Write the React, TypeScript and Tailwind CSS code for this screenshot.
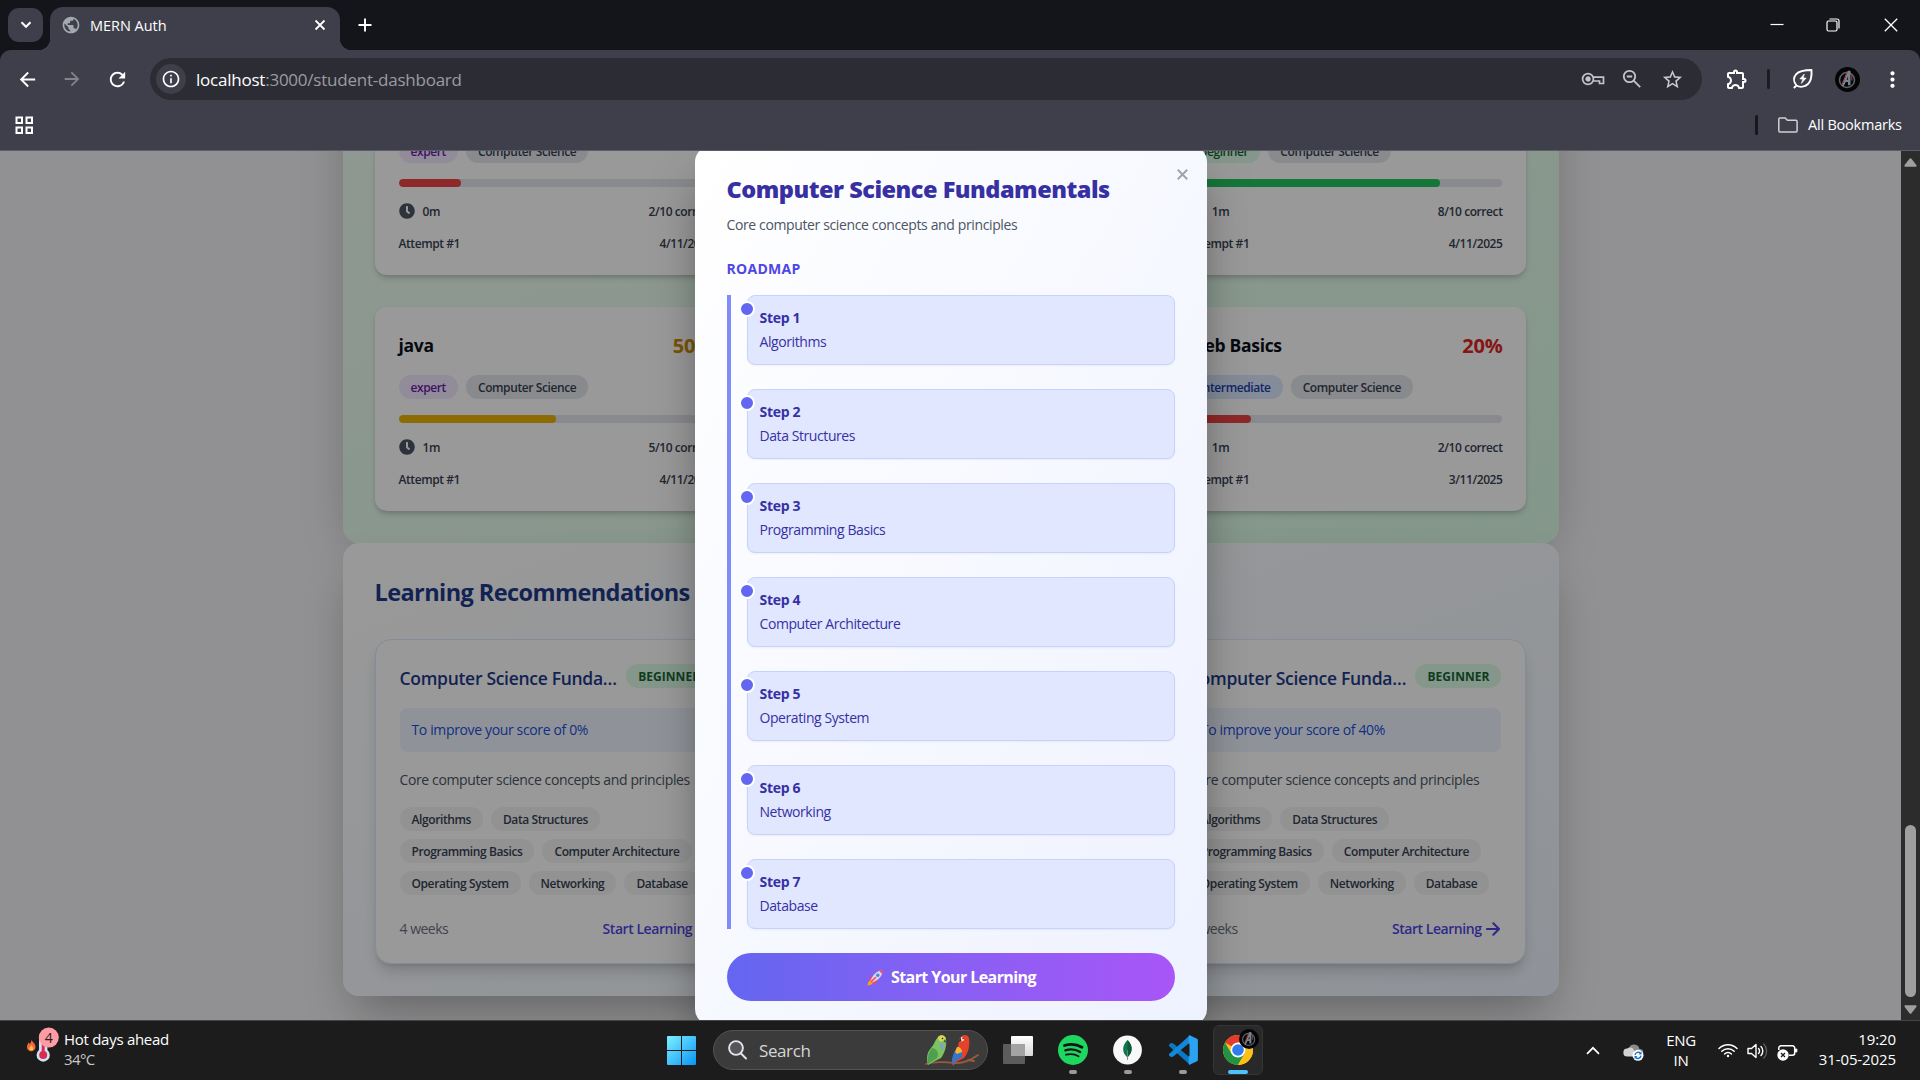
import React from "react";
import { FaClock } from "react-icons/fa";
import {
  MdArrowBack,
  MdArrowForward,
  MdInfoOutline,
  MdMoreVert,
  MdOutlineExtension,
  MdPublic,
  MdRefresh,
  MdStarBorder,
} from "react-icons/md";

type Tone = "red" | "yellow" | "green";

const barTone: Record<Tone, string> = {
  red: "bg-[#ef4444]",
  yellow: "bg-[#eab308]",
  green: "bg-[#22c55e]",
};
const scoreTone: Record<Tone, string> = {
  red: "text-[#dc2626]",
  yellow: "text-[#ca8a04]",
  green: "text-[#16a34a]",
};
const levelTone: Record<string, string> = {
  expert: "bg-[#f3e8ff] text-[#6b21a8]",
  intermediate: "bg-[#dbeafe] text-[#1e40af]",
  beginner: "bg-[#dcfce7] text-[#166534]",
};

interface Quiz {
  title: string;
  level: string;
  score: number;
  tone: Tone;
  time: string;
  date: string;
}

const quizzes: Quiz[] = [
  { title: "java", level: "expert", score: 20, tone: "red", time: "0m", date: "4/11/2025" },
  { title: "java", level: "expert", score: 50, tone: "yellow", time: "1m", date: "4/11/2025" },
  { title: "Basics", level: "beginner", score: 80, tone: "green", time: "1m", date: "4/11/2025" },
  { title: "java", level: "expert", score: 50, tone: "yellow", time: "1m", date: "4/11/2025" },
  { title: "java", level: "expert", score: 50, tone: "yellow", time: "1m", date: "4/11/2025" },
  { title: "Web Basics", level: "intermediate", score: 20, tone: "red", time: "1m", date: "3/11/2025" },
];

const topics = [
  "Algorithms",
  "Data Structures",
  "Programming Basics",
  "Computer Architecture",
  "Operating System",
  "Networking",
  "Database",
];

function AvatarMark({ className }: { className: string }) {
  return (
    <svg viewBox="0 0 26 26" className={className}>
      <circle cx="13" cy="13" r="13" fill="#050506" />
      <circle cx="12.5" cy="13.500" r="7.800" fill="none" stroke="#59646e" strokeWidth="1.600" />
      <path d="M7 20 13.500 4h2.600v15h-2.600v-3.500h-2.300L9 20z" fill="#76838e" />
      <path d="M12 13.300 13.600 9.500v3.800z" fill="#1a1012" />
      <path d="M13 4.500 7.500 18M17.500 8v6" stroke="#a84a44" strokeWidth="1.100" />
    </svg>
  );
}

function BrowserChrome() {
  return (
    <header className="flex h-[151px] shrink-0 flex-col border-b border-[#5c5d69] bg-[#14151a] text-white">
      <div className="flex h-[50px] shrink-0 pl-2">
        <div className="mt-2 flex h-[34px] w-[35px] items-center justify-center rounded-[11px] bg-[#3e3f4b]">
          <svg width="12" height="8" viewBox="0 0 12 8" fill="none" stroke="#fff" strokeWidth="2">
            <path d="M1.500 1.300 6 5.800l4.500-4.500" />
          </svg>
        </div>
        <div className="relative mt-[7px] ml-[7px] flex h-[43px] w-[290px] items-center rounded-t-[13px] bg-[#3e3f4b] pb-[7px] pl-[11px]">
          <span className="absolute bottom-0 -left-3 size-3 bg-[radial-gradient(circle_at_0_0,transparent_12px,#3e3f4b_12.500px)]" />
          <span className="absolute -right-3 bottom-0 size-3 bg-[radial-gradient(circle_at_100%_0,transparent_12px,#3e3f4b_12.500px)]" />
          <MdPublic className="size-[20px] text-[#a5a8ae]" />
          <span className="ml-[9px] flex-1 pt-px text-[14.500px] leading-5 tracking-[-0.03px]">MERN Auth</span>
          <svg width="12" height="12" viewBox="0 0 12 12" stroke="#fff" strokeWidth="1.8" className="mr-[14px]">
            <path d="m1.500 1.500 9 9m0-9-9 9" />
          </svg>
        </div>
        <svg width="14" height="14" viewBox="0 0 14 14" stroke="#fff" strokeWidth="1.900" className="mt-[18px] ml-[18px]">
          <path d="M7 .5v13M.5 7h13" />
        </svg>
        <div className="ml-auto flex h-[49px] items-center">
          <svg width="14" height="14" viewBox="0 0 14 14" stroke="#fff" strokeWidth="1.200" className="mr-[42px]">
            <path d="M.5 6.500h13" />
          </svg>
          <svg width="14" height="14" viewBox="0 0 14 14" fill="none" stroke="#fff" strokeWidth="1.200" className="mr-[44px]">
            <rect x="1" y="3" width="10" height="10" rx="1.500" />
            <path d="M3.500 1H11a2 2 0 0 1 2 2v7.500" />
          </svg>
          <svg width="14" height="14" viewBox="0 0 14 14" stroke="#fff" strokeWidth="1.300" className="mr-[22px]">
            <path d="m.8.8 12.400 12.400m0-12.400L.8 13.200" />
          </svg>
        </div>
      </div>

      <div className="flex h-[100px] flex-col rounded-t-[11px] bg-[#3e3f4b]">
        <div className="mt-2 flex h-[42px] shrink-0 items-center">
          <MdArrowBack className="ml-[16px] size-[23px]" />
          <MdArrowForward className="ml-[22px] size-[22px] text-[#82838b]" />
          <MdRefresh className="ml-[23px] size-[23px]" />
          <div className="ml-[21px] flex h-[42px] w-[1552px] items-center rounded-full bg-[#2c2d34] pr-[18px] pl-[6px]">
            <div className="flex size-[30px] items-center justify-center rounded-full bg-[#3e3f4b]">
              <MdInfoOutline className="size-5" />
            </div>
            <span className="ml-[10px] flex-1 pt-px text-[17px] leading-6 tracking-[-0.23px] text-[#9b9ca3]">
              <span className="text-white">localhost</span>:3000/student-dashboard
            </span>
            <svg width="24" height="14" viewBox="0 0 24 14" fill="none" stroke="#c3c4c9" strokeWidth="1.700">
              <circle cx="7" cy="7" r="5.400" />
              <circle cx="7" cy="7" r="1.800" fill="#c3c4c9" />
              <path d="M12 5.200h10.500v6.300h-4V9H12" />
            </svg>
            <svg width="20" height="20" viewBox="0 0 20 20" fill="none" stroke="#c3c4c9" strokeWidth="1.800" className="ml-[17px]">
              <circle cx="7.500" cy="7.500" r="5.700" />
              <path d="m11.700 11.700 6.500 6.500M4.800 7.500h5.400" />
            </svg>
            <MdStarBorder className="ml-[19px] size-[23px] text-[#c9cace]" />
          </div>
          <MdOutlineExtension className="ml-[23px] size-[24px]" />
          <span className="ml-[18px] h-5 w-[3px] rounded bg-[#1b1c22]" />
          <svg width="22" height="22" viewBox="0 0 22 22" fill="none" stroke="#fff" strokeWidth="1.900" strokeLinejoin="round" className="ml-[22px]">
            <path d="M4.500 17.500C1.500 14 1.200 9.500 4 6.300 7 3 12 2 19.500 2c.4 6-.3 11-3.500 14-3.200 3-8 3.500-11.500 1.500zm0 0L1.800 20" />
            <path d="m12.300 6-4.500 5h3l-1.500 4.500 4.900-5.500h-3z" fill="#fff" strokeWidth=".6" />
          </svg>
          <AvatarMark className="ml-[21px] size-[25px]" />
          <MdMoreVert className="ml-[20px] size-[25px]" />
        </div>
        <div className="flex h-[50px] items-center">
          <svg width="18" height="18" viewBox="0 0 18 18" fill="none" stroke="#fff" strokeWidth="2" className="ml-[15px]">
            <path d="M1.500 1.500H7V7H1.500zM11.500 1.500H17V7h-5.500zM1.500 11.500H7V17H1.500zM11.500 11.500H17V17h-5.500z" />
          </svg>
          <span className="ml-auto h-5 w-[3px] rounded bg-[#17181d]" />
          <svg width="20" height="16" viewBox="0 0 20 16" fill="none" stroke="#d0d1d5" strokeWidth="1.500" className="ml-[20px]">
            <path d="M2 .9h5.200l2.200 2.300h8.500a1.200 1.200 0 0 1 1.200 1.200v9.300a1.200 1.200 0 0 1-1.200 1.200H2a1.200 1.200 0 0 1-1.200-1.200V2.100A1.200 1.200 0 0 1 2 .9z" />
          </svg>
          <span className="mr-[17px] ml-[10px] w-[95px] text-[14.500px] leading-5 tracking-[-0.22px] whitespace-nowrap">All Bookmarks</span>
        </div>
      </div>
    </header>
  );
}

function QuizCard({ quiz }: { quiz: Quiz }) {
  return (
    <article className="flex h-[204px] flex-col rounded-xl bg-white p-6 shadow-[0_4px_6px_-1px_rgba(0,0,0,0.16),0_2px_4px_-2px_rgba(0,0,0,0.16)]">
      <div className="flex h-7 items-center justify-between">
        <h3 className="text-[17.500px] leading-7 font-bold tracking-[-0.3px] text-[#0b0f19]">{quiz.title}</h3>
        <span className={`pt-px text-[20px] leading-7 font-bold tracking-[-0.2px] ${scoreTone[quiz.tone]}`}>{quiz.score}%</span>
      </div>
      <div className="mt-4 flex gap-2 text-[12px] leading-4 font-semibold tracking-[-0.4px]">
        <span className={`rounded-full px-3 pt-[5px] pb-[3px] ${levelTone[quiz.level]}`}>{quiz.level}</span>
        <span className="rounded-full bg-[#e5e7eb] px-3 pt-[5px] pb-[3px] text-[#374151]">Computer Science</span>
      </div>
      <div className="mt-4 h-2 overflow-hidden rounded-full bg-[#e5e7eb]">
        <div className={`h-2 rounded-full ${barTone[quiz.tone]}`} style={{ width: `${quiz.score}%` }} />
      </div>
      <div className="mt-4 flex h-4 items-center text-[12px] leading-4 font-semibold tracking-[-0.42px] text-[#374151]">
        <FaClock className="size-4 text-[#4b5563]" />
        <span className="ml-2 pt-0.5">{quiz.time}</span>
        <span className="ml-auto pt-0.5">{quiz.score / 10}/10 correct</span>
      </div>
      <div className="mt-4 flex h-4 items-center justify-between text-[12px] leading-4 font-semibold tracking-[-0.42px] text-[#374151]">
        <span className="pt-0.5">Attempt #1</span>
        <span className="pt-0.5">{quiz.date}</span>
      </div>
    </article>
  );
}

function CourseCard({ score }: { score: number }) {
  return (
    <article className="min-w-0 rounded-2xl border border-[#dbeafe] bg-white p-6 shadow-[0_10px_15px_-3px_rgba(0,0,0,0.16),0_4px_6px_-4px_rgba(0,0,0,0.16)]">
      <div className="flex h-7 items-start justify-between">
        <h3 className="w-[221px] truncate text-[17.500px] leading-7 font-semibold tracking-[-0.3px] text-[#1e3a8a]">
          Computer Science Fundamentals
        </h3>
        <span className="rounded-full bg-[#dcfce7] px-3 pt-[5px] pb-[3px] text-[12px] leading-4 font-bold tracking-[0.05px] text-[#166534]">BEGINNER</span>
      </div>
      <div className="mt-4 rounded-lg bg-[#eff6ff] p-3 text-[14px] leading-5 tracking-[-0.36px] text-[#1d4ed8]">
        To improve your score of {score}%
      </div>
      <p className="mt-4 text-[14px] leading-[23px] tracking-[-0.38px] whitespace-nowrap text-[#4b5563]">
        Core computer science concepts and principles
      </p>
      <div className="mt-4 flex flex-wrap gap-2 text-[12px] leading-4 font-semibold tracking-[-0.4px] text-[#374151]">
        {topics.map((topic) => (
          <span key={topic} className="rounded-full bg-[#f3f4f6] px-3 pt-[5px] pb-[3px]">
            {topic}
          </span>
        ))}
      </div>
      <div className="mt-6 flex h-5 items-center text-[14px] leading-5">
        <span className="tracking-[-0.5px] text-[#6b7280]">4 weeks</span>
        <span className="ml-auto font-semibold tracking-[-0.45px] text-[#4f46e5]">Start Learning</span>
        <svg width="14" height="14" viewBox="0 0 14 14" fill="none" stroke="#4f46e5" strokeWidth="2.100" strokeLinecap="round" strokeLinejoin="round" className="mr-px ml-[5px]">
          <path d="M1 7h12M7.300 1.300 13 7l-5.700 5.700" />
        </svg>
      </div>
    </article>
  );
}

function Rocket() {
  return (
    <svg width="17" height="17" viewBox="0 0 17 17">
      <path d="M1 13.500 4 10l3 3-3.500 3L.6 16.500z" fill="#f9a01b" />
      <path d="M2 9.500 5 6.500l3 .5-4 4.500zM7.500 15.500l3-3-.5-3.500-4.500 4z" fill="#f0436c" />
      <path d="M3.800 11C6 5.500 10 1.500 15.800 1 15.500 7 11.500 11 6 13.200z" fill="#d9d3ea" />
      <path d="M12 1.800C13.300 1.200 14.600 1 16 .9c0 1.400-.3 2.800-.8 4.100z" fill="#f0436c" />
      <circle cx="10.800" cy="6.200" r="1.700" fill="#3f8be0" />
      <path d="m4.500 12.500 4-4" stroke="#f0436c" strokeWidth="1.500" strokeLinecap="round" />
    </svg>
  );
}

function RoadmapModal() {
  return (
    <section className="flex h-[879px] w-[512px] shrink-0 flex-col rounded-2xl bg-gradient-to-br from-white to-[#eef2ff] px-8 pt-[26px] shadow-[0_25px_50px_-12px_rgba(0,0,0,0.5)]">
      <div className="relative h-8">
        <h2 className="pt-px text-[23.500px] leading-8 font-extrabold tracking-[-0.49px] whitespace-nowrap text-[#3730a3]">
          Computer Science Fundamentals
        </h2>
        <svg width="11" height="11" viewBox="0 0 10 10" stroke="#9ca3af" strokeWidth="1.700" className="absolute -top-[3px] -right-[13px]">
          <path d="m.7.7 8.600 8.600m0-8.600L.7 9.300" />
        </svg>
      </div>
      <p className="mt-[11px] text-[14px] leading-5 tracking-[-0.37px] text-[#4b5563]">Core computer science concepts and principles</p>
      <h3 className="mt-6 text-[14px] leading-5 font-bold tracking-[0.3px] text-[#4f46e5]">ROADMAP</h3>
      <ol className="mt-4 flex flex-col gap-6 border-l-4 border-[#818cf8] pl-4">
        {topics.map((topic, index) => (
          <li
            key={topic}
            className="relative h-[70px] rounded-lg border border-[#c7d2fe] bg-[#e0e7ff] p-3 text-[14px] leading-5 text-[#3730a3] shadow-[0_1px_2px_rgba(0,0,0,0.05)]"
          >
            <span className="absolute top-[5px] -left-[9px] size-4 rounded-full border-2 border-white bg-[#6366f1]" />
            <p className="font-bold tracking-[-0.3px]">Step {index + 1}</p>
            <p className="mt-1 tracking-[-0.42px]">{topic}</p>
          </li>
        ))}
      </ol>
      <button className="mt-6 flex h-12 items-center justify-center gap-[7px] rounded-full bg-gradient-to-r from-[#6366f1] to-[#a855f7] pl-0.5 text-[16px] leading-6 font-bold tracking-[-0.58px] text-white">
        <Rocket />
        Start Your Learning
      </button>
    </section>
  );
}

function PageView() {
  return (
    <main className="relative flex h-[869px] shrink-0 overflow-hidden">
      <div className="flex w-[1901px] shrink-0 flex-col justify-end bg-[#f2f2f5] pb-6">
        <div className="mx-auto w-[1216px]">
          <section className="rounded-2xl bg-gradient-to-br from-[#f0fdf4] to-[#dcfce7] p-8 shadow-[0_10px_50px_-10px_rgba(0,0,0,0.27)]">
            <div className="grid grid-cols-3 gap-8">
              {quizzes.map((quiz, index) => (
                <QuizCard key={index} quiz={quiz} />
              ))}
            </div>
          </section>
          <section className="rounded-2xl bg-gradient-to-br from-white to-[#eff6ff] p-8 shadow-[0_25px_50px_-12px_rgba(0,0,0,0.32)]">
            <h2 className="h-8 pt-px text-[23.500px] leading-8 font-bold tracking-[-0.58px] text-[#1e3a8a]">Learning Recommendations</h2>
            <div className="mt-8 grid grid-cols-3 gap-8">
              <CourseCard score={0} />
              <CourseCard score={20} />
              <CourseCard score={40} />
            </div>
          </section>
        </div>
      </div>
      <div className="absolute inset-y-0 left-0 flex w-[1901px] items-center justify-center bg-black/40">
        <RoadmapModal />
      </div>
      <div className="flex flex-1 flex-col items-center bg-[#2c2c2c]">
        <svg width="13" height="9" viewBox="0 0 13 9" fill="#9f9f9f" className="mt-[7px]">
          <path d="M5.500.8a1.300 1.300 0 0 1 2 0l4.800 6.200c.6.800.1 1.700-.8 1.700h-10C.6 8.700.1 7.800.7 7z" />
        </svg>
        <span className="mt-[658px] h-[172px] w-[11px] rounded-full bg-[#9f9f9f]" />
        <svg width="13" height="9" viewBox="0 0 13 9" fill="#9f9f9f" className="mt-[8px]">
          <path d="M5.500 8.200a1.300 1.300 0 0 0 2 0L12.300 2c.6-.8.1-1.700-.8-1.700h-10C.6.300.1 1.200.7 2z" />
        </svg>
      </div>
    </main>
  );
}

function Parrots() {
  return (
    <svg width="54" height="32" viewBox="0 0 54 32">
      <path d="M1 30c12-4 20-1 31-1 8 0 14-3 21-8M43 26l6 1" fill="none" stroke="#9a5b3a" strokeWidth="1.800" strokeLinecap="round" />
      <path d="M13 3c3-3 7-2 8 2 1 6-1 14-5 19l-8 4-5 3c-2-6-1-13 3-17 3-3 4-8 7-11z" fill="#7cc35f" />
      <path d="M7 14c-4 5-5 10-4 16l9-6c2-4 1-9-5-10z" fill="#4fa04e" />
      <path d="M13 3c3-3 7-2 8 2l-5 3c-2-1-3-3-3-5z" fill="#d9d455" />
      <path d="m20 5 1.500 4-2.800-1.500z" fill="#454a52" />
      <path d="M15 8c3 1 4 4 3 8-3-1-4-4-3-8z" fill="#7fa3cf" />
      <path d="M35 4c2-4 8-4 9 0 1 7 0 14-5 20l-8 4-3 4c-2-6 0-10 3-14 3-5 2-10 4-14z" fill="#e8412b" />
      <path d="M32 14c4 0 6 4 5 9l-5 3-4 5c-2-6 0-12 4-17z" fill="#3276c8" />
      <path d="M32 13c3 0 5 2 5 5l-5 2-2-2z" fill="#f3b62e" />
      <path d="M36 3.500c2-1 3 1 3 3l-3 1z" fill="#fbe9dc" />
      <path d="m35.500 4-2 4 3-1.300z" fill="#2c2c30" />
      <circle cx="17.500" cy="4.500" r=".8" fill="#1b1b1b" />
      <circle cx="38" cy="4.500" r=".7" fill="#1b1b1b" />
    </svg>
  );
}

function AppSlot({ children }: { children: React.ReactNode }) {
  return (
    <div className="flex h-[50px] w-[55px] flex-col items-center pt-[10px]">
      {children}
      <span className="mt-[5px] h-1 w-2 rounded-full bg-[#9a9a9a]" />
    </div>
  );
}

function Taskbar() {
  return (
    <footer className="flex h-[60px] shrink-0 border-t border-[#444] bg-[#1c1c1c] text-white">
      <div className="flex w-[667px] items-start pl-[26px]">
        <svg width="34" height="36" viewBox="0 0 34 36" className="mt-[6px]">
          <path d="M5.500 13c1 2 4 3.500 4 7a4.300 4.300 0 0 1-8.600 0c0-2 1.200-3 1.600-4.500.8.500 1 .9 1.300 1.500.9-1 1.500-2.300 1.700-4z" fill="#f2683c" />
          <path d="M5.300 18c.4 1.200 2 1.700 2 3.500a2 2 0 0 1-4 0c0-1.500 1.600-2 2-3.500z" fill="#ffc04a" />
          <path d="M13 10a4.200 4.200 0 0 1 8.400 0v13a6.600 6.600 0 1 1-8.400 0z" fill="#cfe3f8" />
          <circle cx="17.200" cy="28" r="4" fill="#dc2a50" />
          <path d="M17.200 10v17" stroke="#dc2a50" strokeWidth="3" />
          <circle cx="22.800" cy="10.600" r="10" fill="#ff9ba4" />
          <text x="22.800" y="15.600" textAnchor="middle" fontSize="14" fill="#202020">4</text>
        </svg>
        <div className="mt-2 ml-1 text-[15px] leading-5 tracking-[-0.28px]">
          <p>Hot days ahead</p>
          <p className="tracking-[-0.6px] text-[#c9c9c9]">34°C</p>
        </div>
      </div>
      <svg width="29" height="29" viewBox="0 0 29 29" className="mt-[15px]">
        <defs>
          <linearGradient id="win" x1="0" y1="0" x2="1" y2="1">
            <stop offset="0" stopColor="#7df0ff" />
            <stop offset="1" stopColor="#0a94f5" />
          </linearGradient>
        </defs>
        <path d="M1 0h13v14H0V1a1 1 0 0 1 1-1zm14 0h13a1 1 0 0 1 1 1v13H15zM0 15h14v14H1a1 1 0 0 1-1-1zm15 0h14v13a1 1 0 0 1-1 1H15z" fill="url(#win)" />
      </svg>
      <div className="mt-[9px] ml-[17px] flex h-10 w-[275px] items-center rounded-full border border-[#525252] bg-[#3b3b3b] pr-[8px] pl-[14px]">
        <svg width="19" height="20" viewBox="0 0 19 20" fill="#55565a" stroke="#e4e4e4" strokeWidth="1.900" strokeLinecap="round">
          <circle cx="8" cy="8" r="6.900" />
          <path d="m13 13.500 5 5" />
        </svg>
        <span className="ml-[12px] flex-1 pt-px text-[17px] leading-5 tracking-[-0.4px] text-[#d6d6d6]">Search</span>
        <Parrots />
      </div>
      <svg width="30" height="28" viewBox="0 0 30 28" className="mt-[15px] ml-[15px]">
        <defs>
          <linearGradient id="tvFront" x1="0" y1="0" x2="0" y2="1">
            <stop offset="0" stopColor="#fff" />
            <stop offset="1" stopColor="#d8d8d8" />
          </linearGradient>
        </defs>
        <rect x="0" y="8" width="22" height="20" rx="1" fill="#5c5c5c" />
        <rect x="8" y="0" width="22" height="20" rx="1" fill="url(#tvFront)" />
        <path d="M8 8h14v12H8z" fill="#a3a3a3" />
      </svg>
      <div className="mt-[4px] ml-[12px] flex">
        <AppSlot>
          <svg width="30" height="30" viewBox="0 0 30 30" fill="none" stroke="#151515" strokeLinecap="round">
            <circle cx="15" cy="15" r="15" fill="#1ed760" stroke="none" />
            <path d="M6.500 10.500c6-1.700 12.500-1.100 17.500 1.800" strokeWidth="2.800" />
            <path d="M7.300 15.300c5-1.400 10.500-.9 14.900 1.700" strokeWidth="2.300" />
            <path d="M8 19.700c4.500-1.100 8.800-.7 12.500 1.500" strokeWidth="1.900" />
          </svg>
        </AppSlot>
        <AppSlot>
          <svg width="29" height="30" viewBox="0 0 29 30">
            <circle cx="14.500" cy="15" r="14.400" fill="#f7f8f7" />
            <path d="M14.500 5c4.500 4.500 6.500 11-.1 17.500C8 17 9.500 10 14.500 5z" fill="#10774c" />
            <path d="M14.500 5c4.500 4.500 6.500 11-.1 17.500z" fill="#0a5a3a" />
            <path d="M14.500 15v10" stroke="#6d8c7c" strokeWidth=".9" />
          </svg>
        </AppSlot>
        <AppSlot>
          <svg width="30" height="30" viewBox="0 0 30 30">
            <path d="M1 9.500 3 8l2 .2L23 23.500v5.700L21 29 1 11z" fill="#0a78c2" />
            <path d="M1 20.500 3 22l2-.2L23 6.500V.8L21 1 1 19z" fill="#1488d8" />
            <path d="m21.500.3 7 3.300c.9.400 1.400 1 1.400 2v18.800c0 1-.5 1.600-1.400 2l-7 3.300c-.6-.1-.8-.5-.8-1V1.300c0-.5.200-.9.800-1z" fill="#2aa3f2" />
            <path d="M21.500 8.500 13.200 15l8.300 6.500z" fill="#1c1c1c" />
          </svg>
        </AppSlot>
      </div>
      <div className="relative mt-[4px] ml-[3px] flex h-[50px] w-[50px] flex-col items-center rounded-md border border-[#353535] bg-[#292929] pt-[9px]">
        <svg width="30" height="30" viewBox="0 0 30 30">
          <circle cx="15" cy="15" r="15" fill="#fbc116" />
          <path d="M15 15 2.010 7.500A15 15 0 0 1 28 7.500H15z" fill="#e33b2e" />
          <path d="M2.010 7.500A15 15 0 0 0 15 30l6.500-11.200L15 15 8.500 18.800z" fill="#229342" />
          <path d="M15 7.500h13A15 15 0 0 1 15 30l6.500-11.200z" fill="#fbc116" />
          <circle cx="15" cy="15" r="7.400" fill="#fff" />
          <circle cx="15" cy="15" r="5.800" fill="#2f7cf0" />
        </svg>
        <AvatarMark className="absolute top-[3px] right-[3px] size-5" />
        <span className="mt-[5px] h-1 w-5 rounded-full bg-[#4cc2ff]" />
      </div>
      <div className="ml-auto flex h-[59px] items-center">
        <svg width="14" height="9" viewBox="0 0 14 9" fill="none" stroke="#fff" strokeWidth="1.700">
          <path d="m1 7.800 6-6 6 6" />
        </svg>
        <svg width="21" height="18" viewBox="0 0 21 18" className="mt-[2px] ml-[23px]">
          <path d="M6 5a5.500 5.500 0 0 1 10.500 1A3.500 3.500 0 0 1 17 13H8z" fill="#8a8a8a" />
          <path d="M4.500 13.500a4 4 0 0 1-.3-8A5 5 0 0 1 10 5.500l4 8z" fill="#d2d2d2" />
          <circle cx="15" cy="12.300" r="5.500" fill="#fff" />
          <path d="M12 12a3.200 3.200 0 0 1 5.500-1.800m.5 2.400a3.200 3.200 0 0 1-5.500 1.800" fill="none" stroke="#1a73c9" strokeWidth="1.400" />
          <path d="M18.500 8.500v3h-3zM11.500 16v-3h3z" fill="#1a73c9" />
        </svg>
        <div className="ml-[16px] w-[42px] pb-[2px] text-center text-[15px] leading-5 tracking-[-0.3px]">
          <p>ENG</p>
          <p>IN</p>
        </div>
        <svg width="20" height="15" viewBox="0 0 20 15" fill="none" stroke="#fff" strokeWidth="1.500" strokeLinecap="round" className="ml-[16px]">
          <path d="M1 5.500a12.700 12.700 0 0 1 18 0M3.800 8.300a8.800 8.800 0 0 1 12.400 0M6.600 11a4.800 4.800 0 0 1 6.800 0" />
          <circle cx="10" cy="13" r="1.200" fill="#fff" stroke="none" />
        </svg>
        <svg width="21" height="18" viewBox="0 0 21 18" fill="none" stroke="#fff" strokeWidth="1.400" strokeLinecap="round" strokeLinejoin="round" className="ml-[9px]">
          <path d="M1 6.500h3.500L9 2.500v13l-4.500-4H1z" />
          <path d="M11.500 6.500a3.500 3.500 0 0 1 0 5M14 4.500a6.500 6.500 0 0 1 0 9" />
          <path d="M16.800 2a10 10 0 0 1 0 14" stroke="#5c5c5c" />
        </svg>
        <svg width="21" height="18" viewBox="0 0 21 18" fill="none" className="mt-[2px] ml-[9px]">
          <path d="M1.800 7V5a2.200 2.200 0 0 1 2.200-2.200h11.500A2.200 2.200 0 0 1 17.700 5v5a2.200 2.200 0 0 1-2.200 2.200H12" stroke="#fff" strokeWidth="1.500" />
          <path d="M18.500 6h1.300v3h-1.300z" fill="#fff" stroke="#fff" />
          <circle cx="6" cy="12" r="5.700" fill="#fff" />
          <path d="m4 10 4 4m0-4-4 4" stroke="#1c1c1c" strokeWidth="1.300" />
        </svg>
        <div className="mr-6 ml-[8px] w-[90px] pb-[3px] text-right text-[15px] leading-5 tracking-[-0.1px]">
          <p>19:20</p>
          <p>31-05-2025</p>
        </div>
      </div>
    </footer>
  );
}

export default function App() {
  return (
    <div className="flex h-[1080px] w-[1920px] flex-col overflow-hidden font-['Open_Sans','Noto_Sans',sans-serif] [font-stretch:96%]">
      <BrowserChrome />
      <PageView />
      <Taskbar />
    </div>
  );
}
